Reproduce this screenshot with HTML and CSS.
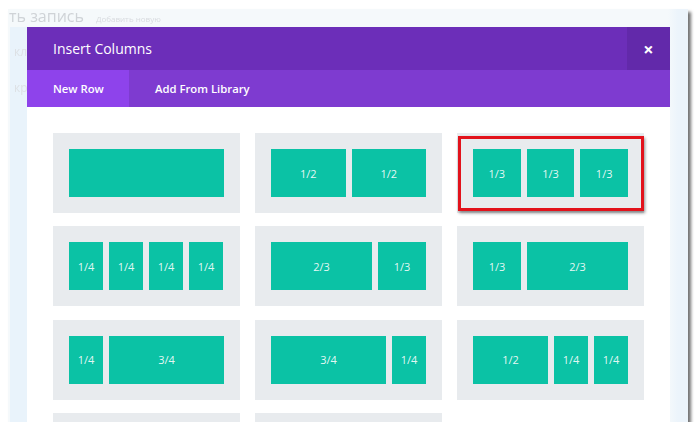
FILE: index.html
```html
<!DOCTYPE html>
<html lang="ru">
<head>
<meta charset="utf-8">
<title>Insert Columns</title>
<link rel="stylesheet" href="styles.css">
</head>
<body>
<div class="screen">
  <div class="page-top">
    <span class="page-title">ть запись</span>
    <span class="page-add">Добавить новую</span>
  </div>
  <div class="page-side">
    <span class="side-a">кл</span>
    <span class="side-b">кр</span>
  </div>

  <div class="modal">
    <div class="modal-head">
      <div class="modal-title">Insert Columns</div>
      <div class="modal-close">×</div>
    </div>
    <div class="modal-tabs">
      <div class="tab tab-active">New Row</div>
      <div class="tab">Add From Library</div>
    </div>
    <div class="modal-body">
      <div class="layout">
        <div class="col w-full"></div>
      </div>
      <div class="layout">
        <div class="col w-half">1/2</div>
        <div class="col w-half">1/2</div>
      </div>
      <div class="layout highlighted">
        <div class="col w-third">1/3</div>
        <div class="col w-third">1/3</div>
        <div class="col w-third">1/3</div>
        <div class="mark"></div>
      </div>

      <div class="layout">
        <div class="col w-quarter">1/4</div>
        <div class="col w-quarter">1/4</div>
        <div class="col w-quarter">1/4</div>
        <div class="col w-quarter">1/4</div>
      </div>
      <div class="layout">
        <div class="col w-twothird">2/3</div>
        <div class="col w-third">1/3</div>
      </div>
      <div class="layout">
        <div class="col w-third">1/3</div>
        <div class="col w-twothird">2/3</div>
      </div>

      <div class="layout">
        <div class="col w-quarter">1/4</div>
        <div class="col w-threeq">3/4</div>
      </div>
      <div class="layout">
        <div class="col w-threeq">3/4</div>
        <div class="col w-quarter">1/4</div>
      </div>
      <div class="layout">
        <div class="col w-half">1/2</div>
        <div class="col w-quarter">1/4</div>
        <div class="col w-quarter">1/4</div>
      </div>

      <div class="layout"></div>
      <div class="layout"></div>
    </div>
  </div>
</div>
</body>
</html>
```

FILE: styles.css
```css
* { box-sizing: border-box; }

html, body {
  margin: 0;
  padding: 0;
  background: #ffffff;
  font-family: "Open Sans", "Noto Sans", sans-serif;
}

.screen {
  position: relative;
  width: 680px;
  height: 413px;
  margin: 9px 0 0 8px;
  background: linear-gradient(to right, #f5f9fb 0, #f5f9fb 660px, #ecf4fb 670px, #ecf4fb 680px);
  overflow: hidden;
  box-shadow: 3px 3px 3px rgba(0, 0, 0, 0.55);
}

.page-top {
  display: flex;
  align-items: baseline;
  gap: 12px;
  height: 18px;
  padding-left: 1px;
  color: #cfd3d7;
  filter: blur(0.6px);
}

.page-title {
  font-size: 16px;
  line-height: 16px;
  margin-top: -1px;
}

.page-add {
  font-size: 8px;
  color: #d8dbdf;
}

.page-side {
  position: absolute;
  left: 2px;
  top: 18px;
  bottom: 0;
  width: 17px;
  background: #e9f3fb;
  color: #dde1e5;
  font-size: 12px;
  filter: blur(0.7px);
}

.side-a { position: absolute; top: 16px; left: 4px; }
.side-b { position: absolute; top: 52px; left: 4px; }

.modal {
  position: absolute;
  left: 19px;
  top: 18px;
  width: 643px;
  bottom: -20px;
  background: #ffffff;
}

.modal-head {
  display: flex;
  align-items: center;
  height: 43px;
  background: #6c2eb9;
}

.modal-title {
  flex: 1;
  padding-left: 26px;
  color: #ffffff;
  font-size: 14px;
  font-weight: 400;
}

.modal-close {
  width: 43px;
  height: 43px;
  display: flex;
  align-items: center;
  justify-content: center;
  background: #6229aa;
  color: #ffffff;
  font-size: 18px;
  font-weight: 700;
  line-height: 1;
}

.modal-tabs {
  display: flex;
  height: 37px;
  background: #7e3bd0;
}

.tab {
  display: flex;
  align-items: center;
  padding: 0 26px;
  color: #ffffff;
  font-size: 11.3px;
  font-weight: 600;
  white-space: nowrap;
}

.tab-active {
  background: #8e43eb;
  width: 102px;
  padding: 0 0 0 26px;
}

.modal-body {
  display: grid;
  grid-template-columns: repeat(3, 187px);
  grid-auto-rows: 80px;
  column-gap: 15px;
  row-gap: 13.3px;
  padding: 26px 26px;
}

.layout {
  position: relative;
  display: flex;
  gap: 6px;
  padding: 16px;
  background: #e8ebee;
}

.col {
  height: 48px;
  background: #0bc2a5;
  color: rgba(255, 255, 255, 0.9);
  font-size: 11px;
  display: flex;
  align-items: center;
  justify-content: center;
}

.w-full { width: 155px; }
.w-half { width: 75px; }
.w-third { width: 48px; }
.w-quarter { width: 34px; }
.w-twothird { width: 101px; }
.w-threeq { width: 115px; }

.mark {
  position: absolute;
  left: 1px;
  top: 3px;
  right: 0;
  bottom: 2px;
  border: 3px solid #e2121b;
  box-shadow: 1px 2px 3px rgba(0, 0, 0, 0.45);
}
```
